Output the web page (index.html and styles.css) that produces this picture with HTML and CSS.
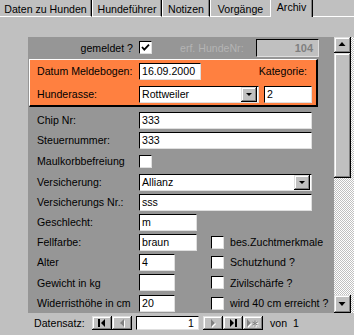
FILE: index.html
```html
<!DOCTYPE html>
<html lang="de">
<head>
<meta charset="utf-8">
<title>Archiv</title>
<link rel="stylesheet" href="styles.css">
</head>
<body>
<div class="tabs">
  <div class="tab t1">Daten zu Hunden</div>
  <div class="tab t2">Hundeführer</div>
  <div class="tab t3">Notizen</div>
  <div class="tab t4">Vorgänge</div>
  <div class="tab t5 sel">Archiv</div>
  <div class="tabfill"></div>
</div>

<div class="main">
  <div class="form">
    <div class="toprow">
      <span class="toplabel">gemeldet ?</span>
      <span class="cb"><svg width="11" height="11" viewBox="0 0 11 11"><path d="M2 5 L4.3 7.6 L9 2.6" fill="none" stroke="#000" stroke-width="1.8"/></svg></span>
      <span class="dis">erf. HundeNr:</span>
      <span class="numbox">104</span>
    </div>

    <div class="orange">
      <div class="orow">
        <span class="lbl">Datum Meldebogen:</span>
        <span class="inp w62">16.09.2000</span>
        <span class="kat">Kategorie:</span>
      </div>
      <div class="orow r2">
        <span class="lbl">Hunderasse:</span>
        <span class="combo w120"><span class="val">Rottweiler</span><span class="ddbtn"><svg width="16" height="15" viewBox="0 0 16 15"><polygon points="5,6 11,6 8,9" fill="#000"/></svg></span></span>
        <span class="inp w48 ml5">2</span>
      </div>
    </div>

    <div class="rows">
      <div class="row h20"><span class="lbl">Chip Nr:</span><span class="inp w173">333</span></div>
      <div class="row h20"><span class="lbl">Steuernummer:</span><span class="inp w173">333</span></div>
      <div class="row h22"><span class="lbl">Maulkorbbefreiung</span><span class="cb"></span></div>
      <div class="row h20"><span class="lbl">Versicherung:</span><span class="combo w173"><span class="val">Allianz</span><span class="ddbtn"><svg width="16" height="15" viewBox="0 0 16 15"><polygon points="5,6 11,6 8,9" fill="#000"/></svg></span></span></div>
      <div class="row h20"><span class="lbl">Versicherungs Nr.:</span><span class="inp w173">sss</span></div>
      <div class="row h20"><span class="lbl">Geschlecht:</span><span class="field"><span class="inp w58">m</span></span></div>
      <div class="row h20"><span class="lbl">Fellfarbe:</span><span class="field"><span class="inp w58">braun</span></span><span class="cb"></span><span class="cblbl">bes.Zuchtmerkmale</span></div>
      <div class="row h20"><span class="lbl">Alter</span><span class="field"><span class="inp w36">4</span></span><span class="cb"></span><span class="cblbl">Schutzhund ?</span></div>
      <div class="row h21"><span class="lbl">Gewicht in kg</span><span class="field"><span class="inp w36"></span></span><span class="cb"></span><span class="cblbl">Zivilschärfe ?</span></div>
      <div class="row h20"><span class="lbl">Widerristhöhe in cm</span><span class="field"><span class="inp w36">20</span></span><span class="cb"></span><span class="cblbl">wird 40 cm erreicht ?</span></div>
    </div>
  </div>

  <div class="sb">
    <div class="sbbtn up"><svg width="17" height="16" viewBox="0 0 17 16"><polygon points="8,5 4.5,9 11.5,9" fill="#000"/></svg></div>
    <div class="thumb"></div>
    <div class="track"></div>
    <div class="sbbtn down"><svg width="17" height="18" viewBox="0 0 17 18"><polygon points="4.5,7 11.5,7 8,11" fill="#000"/></svg></div>
  </div>
</div>

<div class="nav">
  <span class="navlbl">Datensatz:</span>
  <span class="nb"><svg width="20" height="14" viewBox="0 0 20 14"><rect x="6" y="3" width="2" height="8" fill="#000"/><polygon points="13,3 13,11 9,7" fill="#000"/></svg></span>
  <span class="nb"><svg width="20" height="14" viewBox="0 0 20 14"><polygon points="13,4 13,12 9,8" fill="#fff"/><polygon points="12,3 12,11 8,7" fill="#808080"/></svg></span>
  <span class="navinp">1</span>
  <span class="nb"><svg width="20" height="14" viewBox="0 0 20 14"><polygon points="9,4 9,12 13,8" fill="#fff"/><polygon points="8,3 8,11 12,7" fill="#808080"/></svg></span>
  <span class="nb"><svg width="20" height="14" viewBox="0 0 20 14"><polygon points="7,3 7,11 11,7" fill="#000"/><rect x="12" y="3" width="2" height="8" fill="#000"/></svg></span>
  <span class="nb"><svg width="20" height="14" viewBox="0 0 20 14"><g fill="#fff" stroke="#fff"><polygon points="5,4 5,12 9,8" stroke="none"/><path d="M13 5.5 V11.5 M10.5 7 L15.5 10 M10.5 10 L15.5 7" stroke-width="1" fill="none"/></g><g fill="#808080" stroke="#808080"><polygon points="4,3 4,11 8,7" stroke="none"/><path d="M12 4.5 V10.5 M9.5 6 L14.5 9 M9.5 9 L14.5 6" stroke-width="1" fill="none"/></g></svg></span>
  <span class="von">von&nbsp;&nbsp;1</span>
</div>
</body>
</html>
```

FILE: styles.css
```css
* { box-sizing: border-box; }

html, body {
  margin: 0;
  padding: 0;
}

body {
  width: 354px;
  height: 335px;
  overflow: hidden;
  background: #c0c0c0;
  font-family: "Liberation Sans", Arial, sans-serif;
  font-size: 10.6px;
  color: #000;
}

/* ---------- tabs ---------- */
.tabs {
  display: flex;
  height: 17px;
}

.tab {
  height: 17px;
  line-height: 16px;
  text-align: center;
  white-space: nowrap;
  border-left: 1px solid #fff;
  border-right: 1px solid #000;
  border-bottom: 1px solid #fff;
  box-shadow: inset -1px 0 #808080;
  padding-bottom: 1px;
}

.t1 { width: 92px; border-left: none; padding-top: 1px; }
.t2 { width: 70px; padding-top: 1px; }
.t3 { width: 48px; padding-top: 1px; }
.t4 { width: 60px; border-right: none; box-shadow: none; padding-top: 1px; }
.t5 { width: 43px; }

.tab.sel {
  border-bottom: none;
  line-height: 14px;
  padding-top: 0;
}

.tabfill {
  flex: 1;
  height: 17px;
  border-bottom: 1px solid #fff;
}

/* ---------- main ---------- */
.main {
  display: flex;
  margin-top: 20px;
  padding-left: 28px;
}

.form {
  width: 306px;
  height: 276px;
  background: #969696;
  display: flex;
  flex-direction: column;
}

.toprow {
  height: 21px;
  display: flex;
  align-items: center;
}

.toplabel {
  width: 105px;
  text-align: right;
  margin-right: 6px;
}

.dis {
  width: 76px;
  margin-left: 28px;
  color: #b4b4b4;
}

.numbox {
  width: 63px;
  height: 18px;
  background: #c0c0c0;
  border: 1px solid;
  border-color: #000 #dfdfdf #dfdfdf #000;
  color: #7f7f7f;
  font-weight: bold;
  font-size: 11px;
  text-align: right;
  padding-right: 5px;
  line-height: 16px;
}

/* ---------- orange block ---------- */
.orange {
  margin-top: 1px;
  margin-left: 1px;
  width: 289px;
  height: 48px;
  background: #ff8040;
  border-top: 1px solid #fff;
  border-left: 1px solid #fff;
  border-right: 2px solid #000;
  border-bottom: 2px solid #000;
  padding: 1px 0 1px 7px;
  display: flex;
  flex-direction: column;
}

.orow {
  height: 20px;
  display: flex;
  align-items: center;
}

.orow.r2 { margin-top: 3px; }

.kat {
  margin-left: auto;
  padding-right: 9px;
}

/* ---------- rows ---------- */
.rows {
  margin-top: 3px;
  display: flex;
  flex-direction: column;
}

.row {
  display: flex;
  align-items: center;
  padding-left: 9px;
}

.h20 { height: 20px; }
.h21 { height: 21px; }
.h22 { height: 22px; }

.lbl {
  width: 102px;
  flex-shrink: 0;
  white-space: nowrap;
}

.field {
  width: 72px;
  flex-shrink: 0;
  display: flex;
}

.cblbl {
  margin-left: 6px;
  white-space: nowrap;
}

/* ---------- controls ---------- */
.inp {
  height: 17px;
  background: #fff;
  border: 1px solid;
  border-color: #000 #dfdfdf #dfdfdf #000;
  padding-left: 2px;
  line-height: 15px;
  white-space: nowrap;
  overflow: hidden;
  flex-shrink: 0;
}

.w36 { width: 36px; }
.w48 { width: 48px; }
.w58 { width: 58px; }
.w62 { width: 62px; }
.w120 { width: 120px; }
.w173 { width: 173px; }
.ml5 { margin-left: 5px; }

.combo {
  height: 17px;
  background: #fff;
  border: 1px solid;
  border-color: #000 #dfdfdf #dfdfdf #000;
  display: flex;
  align-items: center;
  flex-shrink: 0;
}

.combo .val {
  flex: 1;
  padding-left: 2px;
  line-height: 15px;
}

.ddbtn {
  width: 16px;
  height: 15px;
  margin-right: 1px;
  background: #c0c0c0;
  box-shadow: inset -1px -1px #000, inset 1px 1px #dfdfdf, inset -2px -2px #808080, inset 2px 2px #fff;
  display: flex;
}

.cb {
  width: 13px;
  height: 13px;
  flex-shrink: 0;
  background: #fff;
  border: 1px solid;
  border-color: #000 #dfdfdf #dfdfdf #000;
  display: flex;
}

/* ---------- scrollbar ---------- */
.sb {
  width: 20px;
  height: 276px;
  display: flex;
  flex-direction: column;
  background: repeating-conic-gradient(#c0c0c0 0 25%, #fff 0 50%) 0 0 / 2px 2px;
}

.sbbtn, .thumb {
  width: 17px;
  background: #c0c0c0;
  box-shadow: inset -1px -1px #000, inset 1px 1px #dfdfdf, inset -2px -2px #808080, inset 2px 2px #fff;
  display: flex;
}

.up { height: 16px; }
.thumb { height: 125px; }
.track { flex: 1; }
.down { height: 18px; }

/* ---------- navigation ---------- */
.nav {
  display: flex;
  align-items: center;
  height: 15px;
  margin-top: 2px;
  padding-left: 34px;
}

.navlbl {
  width: 58px;
}

.nb {
  width: 20px;
  height: 14px;
  background: #c0c0c0;
  box-shadow: inset -1px -1px #000, inset 1px 1px #dfdfdf, inset -2px -2px #808080, inset 2px 2px #fff;
  display: flex;
}

.navinp {
  width: 63px;
  height: 14px;
  margin: 0 4px;
  background: #fff;
  border: 1px solid;
  border-color: #000 #dfdfdf #dfdfdf #000;
  text-align: right;
  padding-right: 4px;
  line-height: 12px;
}

.von {
  margin-left: 7px;
}
```
